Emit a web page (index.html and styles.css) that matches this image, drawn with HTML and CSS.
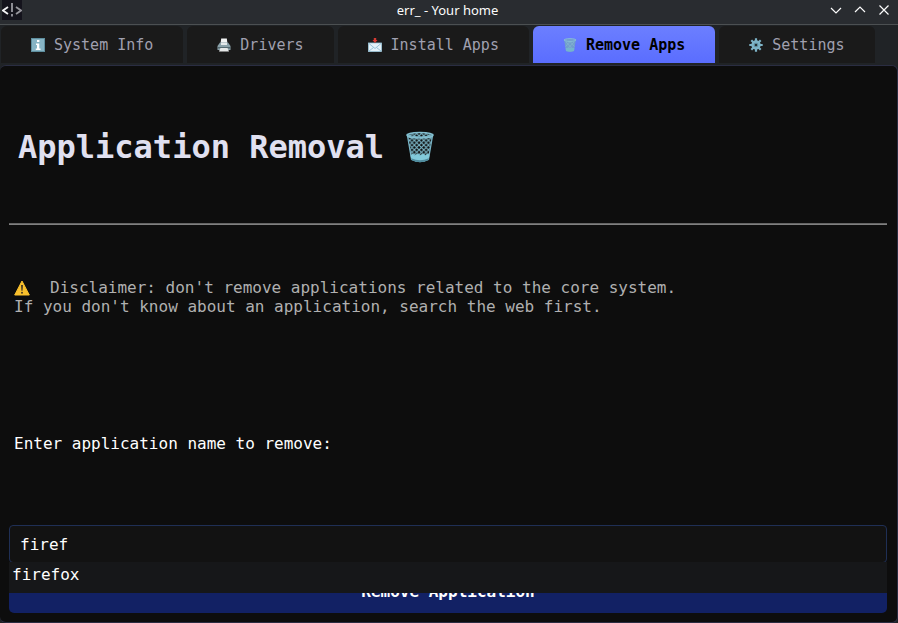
FILE: index.html
```html
<!DOCTYPE html>
<html lang="en">
<head>
<meta charset="utf-8">
<meta name="viewport" content="width=device-width, initial-scale=1">
<title>err_ - Your home</title>
<link rel="stylesheet" href="styles.css">
</head>
<body>
<header class="titlebar">
  <svg class="app-icon" viewBox="0 0 20 20" aria-hidden="true">
    <rect width="20" height="20" fill="#14131c"/>
    <path d="M6 7L1 10.500L6 14" fill="none" stroke="#f2f2f4" stroke-width="1.800"/>
    <path d="M10 3V12M10 14V16.500" stroke="#8c8b93" stroke-width="2"/>
    <path d="M14 7L19 10.500L14 14" fill="none" stroke="#96959c" stroke-width="1.800"/>
  </svg>
  <span class="window-title">err_ - Your home</span>
  <div class="window-controls">
    <button type="button" aria-label="Minimize"><svg viewBox="0 0 12 12"><path d="M1 4L6 9L11 4"/></svg></button>
    <button type="button" aria-label="Maximize"><svg viewBox="0 0 12 12"><path d="M1 8L6 3L11 8"/></svg></button>
    <button type="button" aria-label="Close"><svg viewBox="0 0 12 12"><path d="M1.500 1.500L10.500 10.500M10.500 1.500L1.500 10.500"/></svg></button>
  </div>
</header>

<nav class="tabs" role="tablist" aria-label="Sections">
  <button class="tab" type="button" role="tab" aria-selected="false">
    <svg class="tab-icon" viewBox="0 0 14 14" aria-hidden="true">
      <rect x="0.500" y="0.500" width="13" height="13" fill="#87b4c4" stroke="#5e8e9e"/>
      <rect x="6" y="2" width="2.400" height="2" fill="#fff"/>
      <path d="M5 5.500H8.300V10.500H9.500V12H4.800V10.500H6V7H5Z" fill="#fff"/>
    </svg>
    <span>System Info</span>
  </button>
  <button class="tab" type="button" role="tab" aria-selected="false">
    <svg class="tab-icon" viewBox="0 0 14 14" aria-hidden="true">
      <path d="M3.500 6L4.200 0.500H9.800L10.500 6Z" fill="#f1f3f3"/>
      <path d="M3 4.500H11L13.500 8V12H0.500V8Z" fill="#8ba2aa"/>
      <path d="M4 5H10V7H4Z" fill="#e4e9ea"/>
      <path d="M1 9H13V10.500H1Z" fill="#536970"/>
      <path d="M3.500 10H10.500L12 13.500H2Z" fill="#e5e8e8"/>
    </svg>
    <span>Drivers</span>
  </button>
  <button class="tab" type="button" role="tab" aria-selected="false">
    <svg class="tab-icon" viewBox="0 0 14 14" aria-hidden="true">
      <rect x="0.500" y="5" width="13" height="8.500" fill="#e4f1f8" stroke="#9fc9dd" stroke-width="0.800"/>
      <path d="M1 5.500L7 10.500L13 5.500M1 13L5.500 9.500M13 13L8.500 9.500" fill="none" stroke="#86b6ce" stroke-width="0.800"/>
      <path d="M5.800 0H8.200V2H9.500L7 5L4.500 2H5.800Z" fill="#d63a32"/>
    </svg>
    <span>Install Apps</span>
  </button>
  <button class="tab active" type="button" role="tab" aria-selected="true">
    <svg class="tab-icon" viewBox="0 0 14 14" aria-hidden="true">
      <path d="M1.200 2L3 13Q7 14.500 11 13L12.800 2Z" fill="#719fcb"/>
      <path d="M3 4L10.500 12M7 3.500L11.500 8.500M11 4L3.500 12M7 3.500L2.500 8.500" stroke="#8ab9d2" stroke-width="0.600"/>
      <path d="M2.600 10H11.400L11 13Q7 14.500 3 13Z" fill="#75b4cc"/>
      <ellipse cx="7" cy="2" rx="6" ry="1.300" fill="#6f98c9" stroke="#8cc5d8" stroke-width="0.900"/>
    </svg>
    <span>Remove Apps</span>
  </button>
  <button class="tab" type="button" role="tab" aria-selected="false">
    <svg class="tab-icon" viewBox="0 0 14 14" aria-hidden="true">
      <g stroke="#7db3c6" stroke-width="2.200">
        <path d="M7 0.300V13.700M0.300 7H13.700M2.300 2.300L11.700 11.700M11.700 2.300L2.300 11.700"/>
      </g>
      <circle cx="7" cy="7" r="4.700" fill="#7db3c6"/>
      <circle cx="7" cy="7" r="2.300" fill="#5d8c9c"/>
      <circle cx="7" cy="7" r="1.100" fill="#1a1a1a"/>
    </svg>
    <span>Settings</span>
  </button>
</nav>

<main class="panel">
  <h1 class="heading">Application Removal
    <svg class="heading-icon" viewBox="0 0 32 34" aria-hidden="true">
      <defs>
        <pattern id="mesh" width="5" height="5" patternUnits="userSpaceOnUse">
          <path d="M-1 -1L6 6M6 -1L-1 6" stroke="#7db9ca" stroke-width="1.200"/>
        </pattern>
      </defs>
      <path d="M2.500 4L7 30Q16 35 25 30L29.500 4Q16 9 2.500 4Z" fill="url(#mesh)" stroke="#78b4c6" stroke-width="1.300"/>
      <path d="M6 26Q8 23 10.500 26Q13 23 16 26Q19 23 21.500 26Q24 23 26 26L25 30.500Q16 35.500 7 30.500Z" fill="#82cadb"/>
      <path d="M6.600 29Q16 33 25.400 29L25 31Q16 35.500 7 31Z" fill="#4f8b9d"/>
      <ellipse cx="16" cy="4.500" rx="13.800" ry="3" fill="url(#mesh)" stroke="#83bfd0" stroke-width="1.600"/>
    </svg>
  </h1>
  <hr class="rule">
  <p class="disclaimer">
    <svg class="warning" viewBox="0 0 16 16" aria-hidden="true">
      <path d="M8 1L15.300 15H0.700Z" fill="#f9c02d" stroke="#f9c02d" stroke-linejoin="round"/>
      <path d="M7 5H9L8.600 10.800H7.400Z" fill="#4a3d24"/>
      <circle cx="8" cy="12.700" r="1" fill="#4a3d24"/>
    </svg><span class="lead">Disclaimer: don't remove applications related to the core system.</span><br>
    If you don't know about an application, search the web first.
  </p>
  <form class="form">
    <label class="label" for="app-name">Enter application name to remove:</label>
    <div class="combo">
      <input class="field" id="app-name" type="text" value="firef" autocomplete="off" role="combobox" aria-expanded="true" aria-controls="matches">
      <ul class="matches" id="matches" role="listbox" aria-label="Matching applications">
        <li role="option" aria-selected="false">firefox</li>
      </ul>
    </div>
    <button class="submit" type="submit">Remove Application</button>
  </form>
</main>
</body>
</html>
```

FILE: styles.css
```css
* {
  box-sizing: border-box;
}

body {
  margin: 0;
  min-height: 100vh;
  display: flex;
  flex-direction: column;
  background: #202326;
  color: #fff;
  font: 16px/19px "DejaVu Sans Mono", monospace;
}

button,
input {
  font: inherit;
}

.titlebar {
  display: grid;
  grid-template-columns: 1fr auto 1fr;
  align-items: center;
  height: 25px;
  padding: 0 8px 4px 2px;
  background: #292c30;
  border-bottom: 1px solid #4c5052;
}

.app-icon {
  width: 20px;
  height: 20px;
}

.window-title {
  padding-left: 3px;
  font: 13px/20px "Noto Sans", sans-serif;
  color: #fcfcfc;
}

.window-controls {
  display: flex;
  justify-content: flex-end;
  gap: 12px;
}

.window-controls button {
  display: flex;
  padding: 0;
  border: 0;
  background: none;
}

.window-controls svg {
  width: 12px;
  height: 12px;
  fill: none;
  stroke: #fcfcfc;
  stroke-width: 1.2;
}

.tabs {
  display: flex;
  gap: 4px;
  padding: 1px 1px 2px;
}

.tab {
  display: flex;
  align-items: center;
  gap: 9px;
  height: 37px;
  padding: 1px 30px 0;
  border: 0;
  border-radius: 6px 6px 0 0;
  background: #1a1a1a;
  color: #a0a0b0;
  font-size: 15px;
  line-height: 18px;
  white-space: nowrap;
}

.tab.active {
  background: linear-gradient(#6c7fff, #5a6dff);
  color: #000;
  font-weight: bold;
}

.tab-icon {
  width: 14px;
  height: 14px;
}

.panel {
  flex: 1;
  display: flex;
  flex-direction: column;
  padding: 62px 10px 9px 9px;
  border: 1px solid #2a2d42;
  border-left: 0;
  border-radius: 6px;
  background: #0d0d0d;
}

.heading {
  display: flex;
  align-items: center;
  gap: 20px;
  margin: 0;
  padding-left: 9px;
  font-size: 32px;
  line-height: 38px;
  color: #e0e0f0;
}

.heading-icon {
  width: 32px;
  height: 32px;
}

.rule {
  width: 100%;
  height: 2px;
  margin: 57px 0 53px;
  border: 0;
  border-top: 1px solid #646464;
  background: #808080;
}

.disclaimer {
  margin: 0;
  padding-left: 5px;
  color: #b0b0b0;
}

.warning {
  width: 16px;
  height: 16px;
  margin-right: 20px;
  vertical-align: -3px;
}

.form {
  display: flex;
  flex-direction: column;
  margin-top: auto;
}

.label {
  padding-left: 5px;
  margin-bottom: 72px;
}

.combo {
  position: relative;
}

.field {
  display: block;
  width: 100%;
  height: 38px;
  padding: 0 10px;
  border: 1px solid #1f2f55;
  border-radius: 4px;
  outline: 0;
  background: #121212;
  color: #fff;
}

.matches {
  position: absolute;
  top: 37px;
  left: 0;
  right: 0;
  margin: 0;
  padding: 3px 3px 9px;
  list-style: none;
  background: #161719;
}

.submit {
  height: 42px;
  margin-top: 8px;
  padding: 0 0 2px;
  border: 0;
  border-radius: 5px;
  background: #122164;
  color: #fff;
  font-weight: bold;
}
```
